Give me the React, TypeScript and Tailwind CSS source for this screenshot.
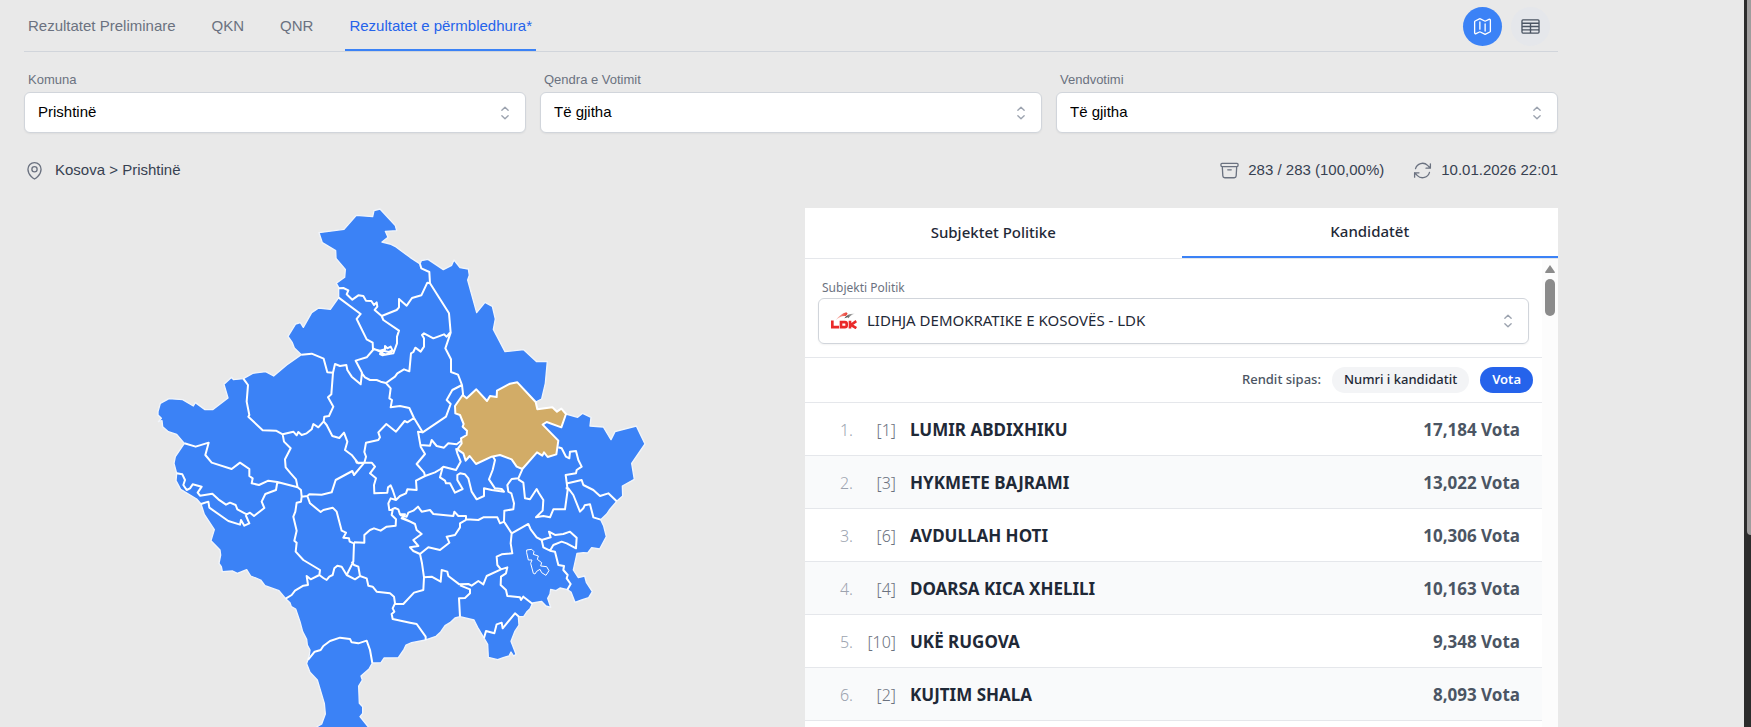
import { useState } from "react";
import {
  HiOutlineArchiveBox,
  HiOutlineArrowPath,
  HiOutlineMap,
  HiOutlineMapPin,
  HiOutlineTableCells,
} from "react-icons/hi2";

type Candidate = {
  number: number;
  name: string;
  votes: string;
};

const tabs = ["Rezultatet Preliminare", "QKN", "QNR", "Rezultatet e përmbledhura*"];

const filters = [
  { id: "komuna", label: "Komuna", value: "Prishtinë" },
  { id: "qendra", label: "Qendra e Votimit", value: "Të gjitha" },
  { id: "vendvotimi", label: "Vendvotimi", value: "Të gjitha" },
];

const candidates: Candidate[] = [
  { number: 1, name: "LUMIR ABDIXHIKU", votes: "17,184" },
  { number: 3, name: "HYKMETE BAJRAMI", votes: "13,022" },
  { number: 6, name: "AVDULLAH HOTI", votes: "10,306" },
  { number: 4, name: "DOARSA KICA XHELILI", votes: "10,163" },
  { number: 10, name: "UKË RUGOVA", votes: "9,348" },
  { number: 2, name: "KUJTIM SHALA", votes: "8,093" },
];

const KOSOVO =
  "M507,98 582,88 619,46 668,50 672,32 690,27 736,77 740,92 706,94 714,112 696,126 720,132 735,139 780,172 810,192 814,182 834,178 880,209 905,196 912,180 930,203 955,207 958,226 953,240 980,338 1005,307 1027,319 1036,357 1030,388 1065,455 1121,449 1160,485 1192,484 1186,550 1175,597 1157,606 1162,628 1207,622 1221,635 1234,626 1248,642 1283,652 1298,640 1323,652 1320,678 1360,681 1383,719 1395,695 1459,678 1485,732 1445,790 1453,838 1417,858 1418,888 1400,904 1378,930 1370,942 1352,959 1361,978 1369,1010 1349,1047 1325,1043 1313,1059 1300,1058 1281,1060 1270,1110 1285,1133 1304,1128 1309,1147 1327,1175 1316,1193 1295,1200 1275,1207 1263,1176 1252,1169 1230,1164 1218,1172 1202,1168 1200,1182 1193,1195 1202,1222 1188,1218 1175,1204 1148,1209 1140,1226 1130,1236 1121,1250 1105,1250 1107,1275 1095,1293 1083,1324 1098,1363 1091,1368 1083,1356 1077,1368 1062,1372 1043,1379 1015,1372 1013,1333 1002,1314 983,1282 972,1260 930,1250 915,1254 900,1268 885,1277 872,1296 858,1309 827,1320 785,1328 768,1335 762,1348 745,1373 702,1374 693,1388 667,1389 657,1407 633,1428 637,1440 626,1458 628,1510 638,1520 638,1540 630,1550 655,1581 680,1640 480,1640 500,1581 515,1572 526,1542 523,1510 502,1440 480,1417 470,1391 478,1365 480,1350 472,1335 470,1318 458,1295 450,1265 437,1227 424,1220 420,1208 407,1196 387,1172 345,1157 332,1140 302,1128 290,1109 262,1120 248,1113 217,1115 214,1100 207,1090 212,1065 210,1050 183,1022 193,989 163,943 153,912 140,897 92,868 78,842 80,820 72,790 76,770 103,730 80,703 55,695 38,680 36,662 25,665 34,655 24,645 24,635 31,610 57,596 98,599 130,618 136,608 165,629 188,629 234,594 222,553 245,532 250,539 280,536 308,520 347,515 371,528 410,495 454,464 433,444 427,428 414,409 437,372 451,368 460,382 485,338 506,324 541,328 566,293 566,262 559,250 584,232 586,208 558,175 557,152 517,128Z";

const PRISHTINA =
  "M938,585 950,595 979,568 1011,603 1020,588 1040,591 1041,572 1080,551 1102,547 1157,606 1162,628 1207,622 1221,635 1234,626 1248,642 1234,682 1190,666 1178,674 1225,722 1219,763 1193,771 1182,757 1177,767 1161,757 1117,807 1100,800 1085,778 1050,765 1025,770 978,792 959,768 947,782 940,760 922,748 935,730 933,715 950,705 951,692 938,680 941,672 930,645 916,640 915,618Z";

// municipality borders inside the country outline
const BORDERS = [
  "M566,265 580,264 595,271 590,283 607,299 625,286 640,288 648,302 664,303 672,315 680,307 682,320 674,330 695,348 740,330 747,322 747,297 770,317 786,294 814,286 832,248 840,250",
  "M566,293 632,342 620,357 650,418 668,428 669,450 650,472 617,482 636,518 632,553 605,530 592,510 589,495 570,498 555,492 549,518 532,517 521,476 485,461 454,464",
  "M634,518 645,532 660,540 680,540 692,545 708,549 735,530 742,520 762,508 778,514 783,460 790,456 796,443 812,455 822,440 822,415 816,405 822,400 850,415 882,403 890,410 900,398",
  "M695,348 700,360 747,392 741,410 741,430 730,460 705,464 690,455 669,445",
  "M672,448 690,452 705,448 705,438 712,445 722,440 728,452 712,462 698,466 690,462 700,452 716,456 730,450",
  "M810,192 814,205 838,216 840,250 897,340 902,398 886,445 903,478 903,516 924,524 936,555 940,590",
  "M549,518 544,583 534,592 550,620 537,648 523,650 521,664 505,682 490,672 485,688 470,700 455,705 445,696 440,706 430,695 398,703 378,692 338,691 295,650 298,645 290,605 294,555 280,536",
  "M521,664 530,675 547,708 568,714 582,698 592,725 585,750 605,765 625,790 643,788 648,770 643,756 648,728 685,720 690,712 685,697 709,672 738,695 764,663 772,667 792,654",
  "M708,549 722,565 718,595 726,600 722,622 750,618 778,624 792,654 818,697 888,650 902,612 890,600 907,570 936,555",
  "M398,703 402,725 422,745 405,778 407,802 422,820 438,838 443,862",
  "M103,730 137,740 176,728 166,765 185,788 245,807 270,788 298,807 298,828 308,835 305,850 327,855 355,842 382,846 443,862 453,870 455,890",
  "M80,820 97,823 105,840 100,855 110,870 120,865 128,853 155,860 143,878 150,887 187,881 205,898 228,914 240,908 257,915 262,928 290,943 300,938 312,948 343,924 335,905 346,882 378,870 382,846",
  "M153,912 175,905 178,923 235,963 270,974 273,960 283,977 298,970 287,945",
  "M455,890 453,905 440,908 436,935 430,950 440,992 433,1022 440,1028 437,1055 460,1080 510,1110 508,1125 482,1138 470,1128 474,1155 460,1157 435,1172 425,1185 407,1196",
  "M455,890 472,888 478,883 515,884 545,877 557,840 607,813 612,825 643,788",
  "M472,888 480,910 512,936 520,930 548,923 560,935 575,992 588,998 580,1013 597,1015 599,1025 612,1030 610,1085 590,1125 575,1100 562,1097 553,1105 548,1125 538,1130 530,1140 520,1134 508,1125",
  "M612,1027 643,1028 643,1005 660,990 672,985 692,992 710,980 737,977 738,958 725,945 728,930 718,930 715,910 722,895 738,900 728,870 722,856 714,862 712,878 673,880 672,855 678,835 660,820 675,800 665,788 643,788 620,788 616,778",
  "M725,928 735,924 745,928 750,943 765,943 755,955 780,965",
  "M738,900 750,888 768,880 772,868 800,870 798,842 825,828 822,817 800,792 825,762 812,740 804,695 818,697",
  "M825,828 855,817 872,807 880,800 918,810 932,785 922,760 918,745",
  "M812,735 840,737 845,720 860,738 882,743 895,730 920,733 934,722",
  "M878,802 870,832 885,842 888,850 900,850 915,878 938,867 922,840 922,825 930,820 945,823 955,835 965,875 980,898 1002,888 1002,865 1025,870 1062,875 1055,867 1035,865 1017,838 1028,810 1035,780 1028,768",
  "M1117,808 1105,835 1085,837 1072,855 1075,875 1084,880 1092,910 1090,928 1063,932 1062,965 1085,1000 1082,1030 1087,1060 1055,1063 1040,1070 1042,1095 1053,1108",
  "M1105,838 1120,848 1125,895 1140,898 1160,867 1166,878 1180,900 1178,932 1158,952 1180,948 1200,952 1210,928 1245,928 1253,870 1247,825 1278,820 1280,810 1295,800 1285,780 1278,753 1260,755 1258,775 1248,770 1235,745 1225,742",
  "M1253,850 1295,840 1300,855 1330,870 1350,888 1375,880 1400,904",
  "M1247,865 1255,865 1270,885 1290,935 1300,925 1304,916 1320,913 1330,952 1352,959",
  "M750,945 770,950 775,938 790,932 804,920 815,935 840,930 850,942 910,948 913,935 925,948 948,948 948,958 985,960 1000,952 1042,952 1050,970 1062,965",
  "M755,952 795,972 800,990 815,1002 790,1020 805,1038 780,1042 790,1053 810,1062 816,1090 822,1132 820,1170 792,1178 760,1212 735,1212",
  "M605,1085 612,1095 625,1100 630,1128 615,1138 590,1125M630,1128 650,1135 655,1157 668,1160 680,1175 720,1180 732,1190 735,1210 728,1225 733,1235 725,1242 728,1257 780,1268 800,1272 827,1310 827,1320",
  "M810,1062 835,1042 870,1050 898,1028 890,1010 915,1005 930,982 930,970 948,960",
  "M822,1132 845,1130 872,1145 875,1110 892,1115 895,1128 928,1153 955,1152 965,1157 985,1143 1000,1153 1010,1128 1053,1108",
  "M930,1156 960,1168 960,1180 945,1194 927,1195 930,1250",
  "M1053,1108 1072,1102 1068,1120 1053,1130 1052,1155 1068,1170 1072,1188 1110,1192 1113,1200 1120,1190 1148,1212",
  "M1002,1314 1008,1293 1033,1300 1040,1273 1055,1268 1058,1285 1095,1240 1107,1250",
  "M1085,1000 1135,972 1142,988 1160,1012 1175,1020 1180,1042 1200,1052 1215,1055 1225,1095 1242,1098 1240,1110 1253,1125 1250,1135 1262,1152 1252,1169",
  "M1175,1020 1202,1012 1197,995 1215,1005 1240,1002 1260,995 1280,1013 1278,1045 1250,1030 1235,1025 1210,1035 1200,1052",
  "M474,1380 494,1355 512,1350 520,1338 540,1323 570,1313 600,1317 605,1327 625,1330 650,1322 660,1350 667,1389",
].join("");

const ENCLAVE =
  "M1130,1058 1130,1050 1145,1048 1152,1055 1150,1063 1165,1068 1162,1078 1175,1088 1172,1098 1190,1100 1197,1112 1188,1126 1175,1118 1170,1108 1160,1114 1155,1122 1150,1120 1142,1090 1146,1080 1135,1080Z";

function MunicipalityMap() {
  return (
    <svg viewBox="-378 24 2259 1600" className="w-full" role="img" aria-label="Kosova">
      <g strokeLinejoin="round">
        <path d={KOSOVO} fill="#3b82f6" stroke="#f1f5fb" strokeWidth="4" />
        <path d={BORDERS} fill="none" stroke="#ffffff" strokeWidth="6" />
        <path d={PRISHTINA} fill="#d2ac67" stroke="#ffffff" strokeWidth="6" />
        <path d={ENCLAVE} fill="none" stroke="#ffffff" strokeWidth="3" />
      </g>
    </svg>
  );
}

function UpDown() {
  return (
    <svg
      viewBox="0 0 20 20"
      className="pointer-events-none absolute top-1/2 right-3 size-[18px] -translate-y-1/2 text-[#9ca3af]"
      fill="none"
      stroke="currentColor"
      strokeWidth="1.5"
      strokeLinecap="round"
      strokeLinejoin="round"
    >
      <path d="M6.500 7 10 3.500 13.500 7M6.500 13l3.500 3.500 3.500-3.500" />
    </svg>
  );
}

function LdkLogo() {
  return (
    <svg viewBox="0 0 78 50" className="h-[17px] w-[26px]" aria-hidden="true">
      <defs>
        <linearGradient id="swoosh" x1="0" x2="1">
          <stop offset="0" stopColor="#f9c9c0" />
          <stop offset="1" stopColor="#e8352b" />
        </linearGradient>
        <linearGradient id="wing" x1="0" x2="1">
          <stop offset="0" stopColor="#333" />
          <stop offset="1" stopColor="#ddd" />
        </linearGradient>
      </defs>
      <path d="M14 24C22 12 34 3 46 0l4 5-6 7C32 10 24 16 14 24Z" fill="url(#swoosh)" />
      <path d="M72 5C60 3 48 7 40 18l10-3 2 3C58 10 64 7 72 5Z" fill="url(#wing)" />
      <g fill="none" stroke="#ea2a2a" strokeWidth="8">
        <path d="M4 25V45H24" />
        <path d="M30 30H42Q47 30 47 35V40Q47 45 42 45H30Z" />
        <path d="M57 26V49M76 27L60 38 76 48" />
      </g>
    </svg>
  );
}

export default function App() {
  const [tab, setTab] = useState(3);
  const [view, setView] = useState("harta");
  const [sort, setSort] = useState("vota");

  const pill = (active: boolean) =>
    active
      ? "h-[26px] rounded-full bg-[#2563eb] px-3 font-semibold text-white"
      : "h-[26px] rounded-full bg-[#f3f4f6] px-3";

  const round = (active: boolean) =>
    active
      ? "flex size-[39px] items-center justify-center rounded-full bg-[#3b82f6] text-white"
      : "flex size-[39px] items-center justify-center rounded-full bg-[#e5e7eb] text-[#4b5563]";

  return (
    <div className="flex h-screen overflow-hidden bg-[#e9e9e9] font-['Liberation_Sans',Arial,sans-serif] text-[15px]">
      <main className="min-w-0 flex-1">
        <div className="max-w-[1582px] px-6">
          <header className="flex h-[52px] items-stretch justify-between border-b border-[#d1d5db]">
            <nav className="flex gap-7">
              {tabs.map((label, i) => (
                <button
                  key={label}
                  onClick={() => setTab(i)}
                  className={
                    i === tab
                      ? "border-b-2 border-[#3b82f6] px-1 pt-1 text-[#2563eb]"
                      : "border-b-2 border-transparent px-1 pt-1 text-[#6b7280]"
                  }
                >
                  {label}
                </button>
              ))}
            </nav>
            <div className="mr-2 flex items-center gap-[9px] pt-0.5">
              <button aria-label="Harta" onClick={() => setView("harta")} className={round(view === "harta")}>
                <HiOutlineMap className="size-[21px]" />
              </button>
              <button aria-label="Tabela" onClick={() => setView("tabela")} className={round(view === "tabela")}>
                <HiOutlineTableCells className="size-[21px]" />
              </button>
            </div>
          </header>

          <div className="mt-[18px] grid grid-cols-3 gap-3.5">
            {filters.map((f) => (
              <div key={f.id}>
                <label htmlFor={f.id} className="mb-0.5 block pl-1 text-[13px] leading-5 text-[#6b7280]">
                  {f.label}
                </label>
                <div className="relative">
                  <select
                    id={f.id}
                    className="h-[41px] w-full appearance-none rounded-md border border-[#d1d5db] bg-white pr-10 pl-[13px] text-black shadow-xs"
                  >
                    <option>{f.value}</option>
                  </select>
                  <UpDown />
                </div>
              </div>
            ))}
          </div>

          <div className="mt-[26px] flex items-center justify-between text-[#374151]">
            <div className="flex items-center gap-2.5">
              <HiOutlineMapPin className="size-[21px] text-[#6b7280]" />
              Kosova &gt; Prishtinë
            </div>
            <div className="flex items-center gap-7">
              <span className="flex items-center gap-2">
                <HiOutlineArchiveBox className="size-[21px] text-[#6b7280]" />
                283 / 283 (100,00%)
              </span>
              <span className="flex items-center gap-2">
                <HiOutlineArrowPath className="size-[21px] text-[#6b7280]" />
                10.01.2026 22:01
              </span>
            </div>
          </div>

          <div className="mt-[26px] grid grid-cols-2 gap-7">
            <MunicipalityMap />

            <section className="bg-white font-['Noto_Sans','Open_Sans',sans-serif] text-[#1f2937]">
              <div className="flex h-[51px] border-b border-[#e5e7eb] font-medium">
                <button className="flex-1">Subjektet Politike</button>
                <button className="flex-1 border-b-2 border-[#3b82f6]">Kandidatët</button>
              </div>

              <div className="flex">
                <div className="min-w-0 flex-1">
                  <div className="border-b border-[#e5e7eb] px-[13px] pt-[19px] pb-[13px]">
                    <label htmlFor="subjekti" className="block pl-1 text-xs leading-5 text-[#6b7280]">
                      Subjekti Politik
                    </label>
                    <div className="relative">
                      <div className="pointer-events-none absolute inset-y-0 left-[13px] flex items-center">
                        <LdkLogo />
                      </div>
                      <select
                        id="subjekti"
                        className="h-[46px] w-full appearance-none rounded-md border border-[#d1d5db] bg-transparent pr-10 pl-12 shadow-xs"
                      >
                        <option>LIDHJA DEMOKRATIKE E KOSOVËS - LDK</option>
                      </select>
                      <UpDown />
                    </div>
                  </div>

                  <div className="flex h-[45px] items-center justify-end gap-[11px] border-b border-[#e5e7eb] pr-[9px] text-[13px] font-medium">
                    <span className="text-[#4b5563]">Rendit sipas:</span>
                    <button onClick={() => setSort("numri")} className={pill(sort === "numri")}>
                      Numri i kandidatit
                    </button>
                    <button onClick={() => setSort("vota")} className={pill(sort === "vota")}>
                      Vota
                    </button>
                  </div>

                  <ol>
                    {candidates.map((c, i) => (
                      <li
                        key={c.number}
                        className="flex h-[53px] items-center border-b border-[#e5e7eb] pt-0.5 pr-[22px] text-[17px] font-bold even:bg-[#f9fafb]"
                      >
                        <span className="w-12 text-right text-base font-light text-[#9ca3af]">{i + 1}.</span>
                        <span className="mr-3.5 w-[43px] text-right text-base font-light text-[#6b7280]">
                          [{c.number}]
                        </span>
                        <span className="flex-1">{c.name}</span>
                        <span className="text-[#4b5563]">{c.votes} Vota</span>
                      </li>
                    ))}
                  </ol>
                  <div className="h-6" />
                </div>

                <div className="flex w-4 flex-col items-center bg-[#fcfcfc] pt-1.5">
                  <svg viewBox="0 0 10 8" className="h-2 w-2.5" fill="#8b8b8b">
                    <path d="M5 0 10 7.200Q10 8 9 8H1Q0 8 0 7.200Z" />
                  </svg>
                  <div className="mt-1.5 h-[37px] w-2.5 rounded-full bg-[#8b8b8b]" />
                </div>
              </div>
            </section>
          </div>
        </div>
      </main>

      <div className="w-[7px] bg-[#2c2c2c] pl-[3px]">
        <div className="h-[535px] rounded-bl bg-[#9f9d9d]" />
      </div>
    </div>
  );
}
